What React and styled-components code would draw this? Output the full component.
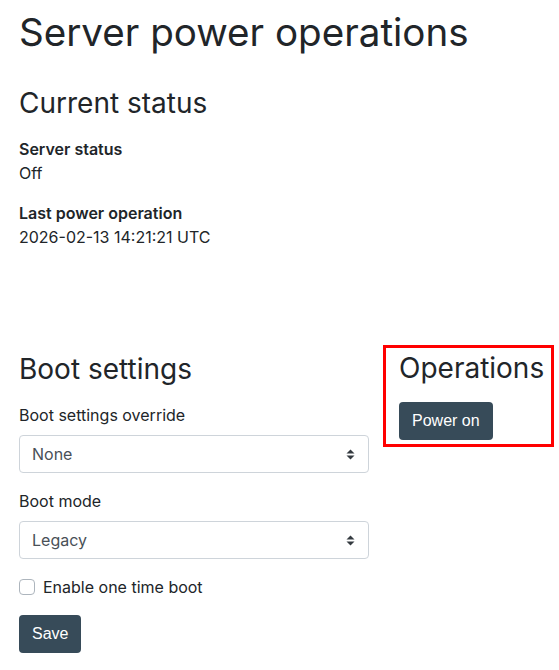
import React from 'react';
import styled, { createGlobalStyle } from 'styled-components';

const GlobalStyle = createGlobalStyle`
  body {
    margin: 0;
    background: #ffffff;
    color: #212529;
    font-family: Inter, "Noto Sans", sans-serif;
  }
`

const Page = styled.main`
  padding: 8px 6px 0 19px;
`

const Title = styled.h1`
  font-size: 38.6px;
  font-weight: 400;
  line-height: 1.2;
  margin: 1px 0 32px 0;
`

const SectionTitle = styled.h2`
  font-size: 28px;
  font-weight: 400;
  line-height: 1.2;
  margin: 0 0 16px 0;
`

const Field = styled.dl`
  margin: 0 0 16px 0;
  font-size: 16px;
  line-height: 24px;
`

const FieldLabel = styled.dt`
  font-weight: 600;
`

const FieldValue = styled.dd`
  margin: 0;
`

const Row = styled.div`
  display: flex;
  align-items: flex-start;
  gap: 14px;
  margin-top: 104px;
`

const Column = styled.section`
  flex: 0 0 350px;
`

const HighlightBox = styled.section`
  flex: 0 0 170px;
  box-sizing: border-box;
  border: 3px solid #ff0000;
  padding: 4px 7px 4px 13px;
  margin-top: -8px;
`

const Label = styled.label`
  display: block;
  font-size: 16px;
  line-height: 24px;
  margin-bottom: 8px;
`

const SelectWrap = styled.div`
  position: relative;
  margin-bottom: 16px;
`

const Select = styled.select`
  appearance: none;
  width: 100%;
  height: 38px;
  padding: 0 36px 0 12px;
  border: 1px solid #ced4da;
  border-radius: 4px;
  background: #ffffff;
  color: #495057;
  font-family: Inter, "Noto Sans", sans-serif;
  font-size: 16px;
`

const Arrows = styled.svg`
  position: absolute;
  right: 14px;
  top: 14px;
  pointer-events: none;
`

const CheckRow = styled.label`
  display: flex;
  align-items: center;
  gap: 8px;
  font-size: 16px;
  line-height: 24px;
  margin-bottom: 16px;
`

const Box = styled.span`
  width: 14px;
  height: 14px;
  border: 1px solid #adb5bd;
  border-radius: 4px;
  background: #ffffff;
`

const Button = styled.button`
  height: 38px;
  padding: 0 13px;
  border: 0;
  border-radius: 4px;
  background: #374b59;
  color: #ffffff;
  font-family: "Liberation Sans", Arial, sans-serif;
  font-size: 16px;
`

function BootSelect({ id, value }) {
  return (
    <SelectWrap>
      <Select id={id} defaultValue={value}>
        <option>{value}</option>
      </Select>
      <Arrows width="9" height="11" viewBox="0 0 9 11">
        <path d="M4.5 0.5 L8.5 4.5 L0.5 4.5 Z M4.5 10.5 L8.5 6.5 L0.5 6.5 Z" fill="#343a40" />
      </Arrows>
    </SelectWrap>
  )
}

export default function App() {
  return (
    <Page>
      <GlobalStyle />
      <Title>Server power operations</Title>

      <SectionTitle>Current status</SectionTitle>
      <Field>
        <FieldLabel>Server status</FieldLabel>
        <FieldValue>Off</FieldValue>
      </Field>
      <Field>
        <FieldLabel>Last power operation</FieldLabel>
        <FieldValue>2026-02-13 14:21:21 UTC</FieldValue>
      </Field>

      <Row>
        <Column>
          <SectionTitle>Boot settings</SectionTitle>
          <Label htmlFor="override">Boot settings override</Label>
          <BootSelect id="override" value="None" />
          <Label htmlFor="mode">Boot mode</Label>
          <BootSelect id="mode" value="Legacy" />
          <CheckRow>
            <Box />
            Enable one time boot
          </CheckRow>
          <Button>Save</Button>
        </Column>
        <HighlightBox>
          <SectionTitle>Operations</SectionTitle>
          <Button>Power on</Button>
        </HighlightBox>
      </Row>
    </Page>
  )
}
